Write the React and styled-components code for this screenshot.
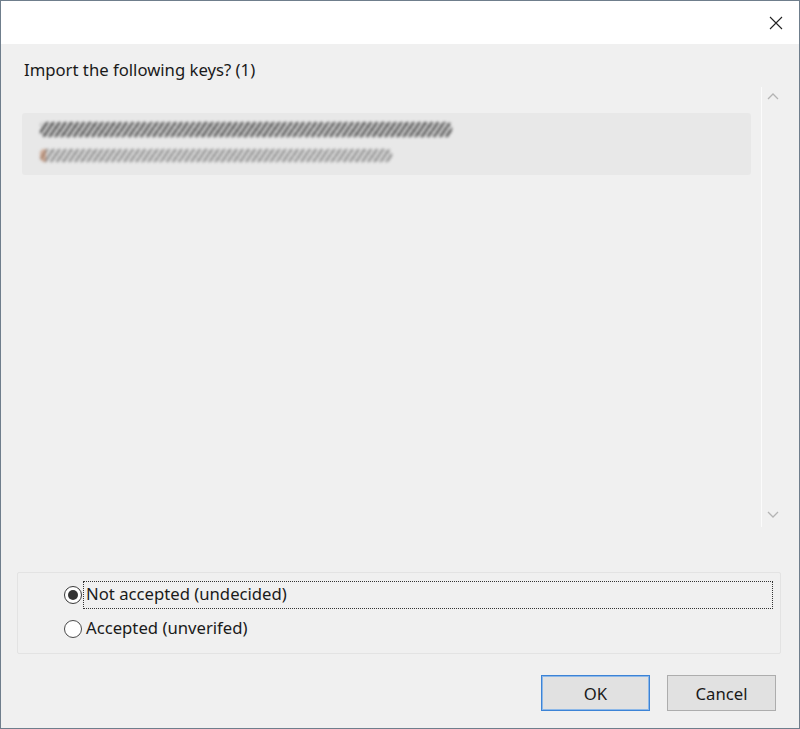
import React, { useState } from 'react';
import styled, { createGlobalStyle } from 'styled-components';

const GlobalStyle = createGlobalStyle`
  html, body {
    margin: 0;
    padding: 0;
    background: #f0f0f0;
  }
  * {
    box-sizing: border-box;
  }
`;

const Window = styled.div`
  width: 800px;
  height: 729px;
  border: 1px solid #6f7e8c;
  display: flex;
  flex-direction: column;
  font-family: 'Noto Sans', 'Open Sans', sans-serif;
  color: #1a1a1a;
  background: #f0f0f0;
`;

const TitleBar = styled.div`
  height: 43px;
  background: #ffffff;
  display: flex;
  justify-content: flex-end;
  align-items: center;
  padding-right: 13px;
`;

const CloseButton = styled.button`
  width: 20px;
  height: 20px;
  border: 0;
  padding: 0;
  background: transparent;
  display: flex;
  align-items: center;
  justify-content: center;
  cursor: pointer;
`;

const Body = styled.div`
  flex: 1;
  display: flex;
  flex-direction: column;
  padding: 15px 18px 17px 16px;
`;

const Prompt = styled.div`
  font-size: 16.7px;
  line-height: 22px;
  padding-left: 7px;
  height: 28px;
`;

const ListArea = styled.div`
  height: 440px;
  margin-left: 5px;
  display: flex;
`;

const List = styled.div`
  flex: 1;
  padding: 26px 10px 0 0;
`;

const KeyItem = styled.div`
  height: 62px;
  background: #e8e8e8;
  border-radius: 3px;
  padding: 9px 18px 0;
  display: flex;
  flex-direction: column;
  gap: 12px;
`;

const Smudge = styled.div`
  height: ${p => p.$h}px;
  width: ${p => p.$w}px;
  background: ${p => p.$tint
    ? `linear-gradient(90deg, rgba(190,120,80,0.5) 0 6px, transparent 6px), repeating-linear-gradient(125deg, ${p.$c} 0 2.5px, transparent 2.5px 5px)`
    : `repeating-linear-gradient(125deg, ${p.$c} 0 2.5px, transparent 2.5px 5px)`};
  filter: blur(1.4px);
  border-radius: 5px;
`;

const ScrollBar = styled.div`
  width: 20px;
  border-left: 1px solid #fbfbfb;
  display: flex;
  flex-direction: column;
  justify-content: space-between;
  align-items: center;
  padding: 5px 0 8px 2px;
`;

const GroupBox = styled.div`
  margin-top: 45px;
  height: 82px;
  border: 1px solid #e3e3e3;
  border-radius: 2px;
  padding: 9px 8px 0 46px;
  display: flex;
  flex-direction: column;
  gap: 8px;
`;

const RadioRow = styled.label`
  display: flex;
  align-items: center;
  height: 26px;
  cursor: pointer;
`;

const RadioDot = styled.span`
  width: 18px;
  height: 18px;
  border-radius: 50%;
  border: 1.5px solid ${p => (p.$checked ? '#3a3a3a' : '#4a4a4a')};
  background: #fff;
  display: flex;
  align-items: center;
  justify-content: center;
  flex-shrink: 0;

  &::after {
    content: '';
    width: 10px;
    height: 10px;
    border-radius: 50%;
    background: ${p => (p.$checked ? '#333' : 'transparent')};
  }
`;

const RadioLabel = styled.span`
  font-size: 16.7px;
  line-height: 22px;
  margin-left: 2px;
  padding: 1px 2px;
  flex: ${p => (p.$focused ? 1 : 'none')};
  outline: ${p => (p.$focused ? '1px dotted #333' : 'none')};
  height: 26px;
`;

const ButtonRow = styled.div`
  margin-top: auto;
  margin-right: 5px;
  display: flex;
  justify-content: flex-end;
  gap: 17px;
`;

const DialogButton = styled.button`
  width: 109px;
  height: 36px;
  font-family: 'Noto Sans', 'Open Sans', sans-serif;
  font-size: 16.7px;
  color: #1a1a1a;
  background: #e1e1e1;
  border: 1px solid ${p => (p.$default ? '#3c83d6' : '#adadad')};
  box-shadow: ${p => (p.$default ? 'inset 0 0 0 1px #8db8e8' : 'none')};
  cursor: pointer;
`;

const Chevron = ({ up }) => (
  <svg width="12" height="8" viewBox="0 0 12 8">
    <path
      d={up ? 'M1 7 L6 2 L11 7' : 'M1 1 L6 6 L11 1'}
      fill="none"
      stroke="#b4b4b4"
      strokeWidth="1.3"
    />
  </svg>
);

export default function App() {
  const [choice, setChoice] = useState('not');

  return (
    <>
      <GlobalStyle />
      <Window>
        <TitleBar>
          <CloseButton aria-label="Close">
            <svg width="14" height="14" viewBox="0 0 14 14">
              <path d="M1 1 L13 13 M13 1 L1 13" stroke="#222" strokeWidth="1.1" />
            </svg>
          </CloseButton>
        </TitleBar>
        <Body>
          <Prompt>Import the following keys? (1)</Prompt>
          <ListArea>
            <List>
              <KeyItem>
                <Smudge $w={412} $h={15} $c="#474747" />
                <Smudge $w={352} $h={13} $c="#8a8a8a" $tint />
              </KeyItem>
            </List>
            <ScrollBar>
              <Chevron up />
              <Chevron />
            </ScrollBar>
          </ListArea>
          <GroupBox>
            <RadioRow onClick={() => setChoice('not')}>
              <RadioDot $checked={choice === 'not'} />
              <RadioLabel $focused>Not accepted (undecided)</RadioLabel>
            </RadioRow>
            <RadioRow onClick={() => setChoice('acc')}>
              <RadioDot $checked={choice === 'acc'} />
              <RadioLabel>Accepted (unverifed)</RadioLabel>
            </RadioRow>
          </GroupBox>
          <ButtonRow>
            <DialogButton $default>OK</DialogButton>
            <DialogButton>Cancel</DialogButton>
          </ButtonRow>
        </Body>
      </Window>
    </>
  );
}
